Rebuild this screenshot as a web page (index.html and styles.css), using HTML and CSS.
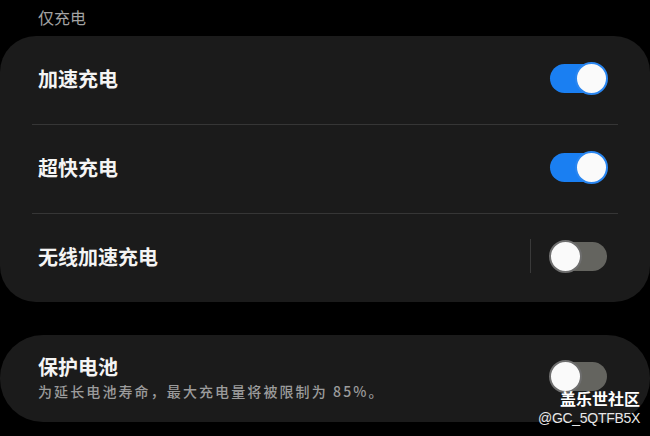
FILE: index.html
```html
<!DOCTYPE html>
<html lang="zh-CN">
<head>
    <meta charset="UTF-8">
    <meta name="viewport" content="width=device-width, initial-scale=1.0">
    <title>仅充电</title>
    <link rel="stylesheet" href="styles.css">
</head>
<body>
    <div class="section-title">仅充电</div>

    <div class="card">
        <div class="row">
            <span class="row-title">加速充电</span>
            <span class="switch on"></span>
        </div>
        <div class="divider"></div>
        <div class="row">
            <span class="row-title">超快充电</span>
            <span class="switch on"></span>
        </div>
        <div class="divider"></div>
        <div class="row">
            <span class="row-title">无线加速充电</span>
            <span class="vline"></span>
            <span class="switch"></span>
        </div>
    </div>

    <div class="card card-small">
        <div class="row row-two">
            <div class="texts">
                <div class="row-title">保护电池</div>
                <div class="row-sub">为延长电池寿命，最大充电量将被限制为 85%。</div>
            </div>
            <span class="switch"></span>
        </div>
    </div>

    <div class="watermark">
        <div class="wm-name">盖乐世社区</div>
        <div class="wm-id">@GC_5QTFB5X</div>
    </div>
</body>
</html>
```

FILE: styles.css
```css
* {
    margin: 0;
    padding: 0;
    box-sizing: border-box;
}

body {
    background-color: #000000;
    font-family: 'Noto Sans CJK SC', 'Noto Sans', sans-serif;
    width: 650px;
    height: 436px;
    position: relative;
    overflow: hidden;
}

.section-title {
    height: 36px;
    padding-left: 38px;
    font-size: 16px;
    line-height: 34px;
    color: #a3a3a3;
}

.card {
    background-color: #1b1b1b;
    border-radius: 36px;
}

.row {
    display: flex;
    align-items: center;
    height: 88px;
    padding: 0 43px 4px 38px;
}

.row-title {
    flex: 1;
    font-size: 20px;
    font-weight: 700;
    line-height: 29px;
    color: #f4f4f4;
}

.divider {
    height: 1px;
    margin: 0 32px;
    background-color: #363636;
}

.vline {
    width: 1px;
    height: 34px;
    background-color: #3a3a3a;
    margin-right: 19px;
}

/* schalter */
.switch {
    position: relative;
    width: 57px;
    height: 29px;
    border-radius: 15px;
    background-color: #64645f;
}

.switch::after {
    content: '';
    position: absolute;
    top: -2px;
    left: -1px;
    width: 33px;
    height: 33px;
    border-radius: 50%;
    background-color: #fafafa;
    border: 2px solid #6e6e6e;
    box-sizing: border-box;
}

.switch.on {
    background-color: #1a7ff2;
}

.switch.on::after {
    left: auto;
    right: -1px;
    border-color: #2a86f0;
}

.card-small {
    margin-top: 33px;
    border-radius: 43px;
}

.row-two {
    height: 87px;
    padding-bottom: 4px;
}

.texts {
    flex: 1;
}

.row-sub {
    font-size: 14px;
    line-height: 20px;
    letter-spacing: 2.1px;
    color: #9b9b9b;
    font-weight: 500;
}

.watermark {
    position: absolute;
    right: 10px;
    bottom: 8px;
    text-align: right;
    color: #ffffff;
}

.wm-name {
    font-size: 16px;
    font-weight: 700;
    line-height: 20px;
}

.wm-id {
    font-family: 'Liberation Sans', sans-serif;
    font-size: 14px;
    line-height: 20px;
    color: #e8e8e8;
    letter-spacing: -0.3px;
}
```
